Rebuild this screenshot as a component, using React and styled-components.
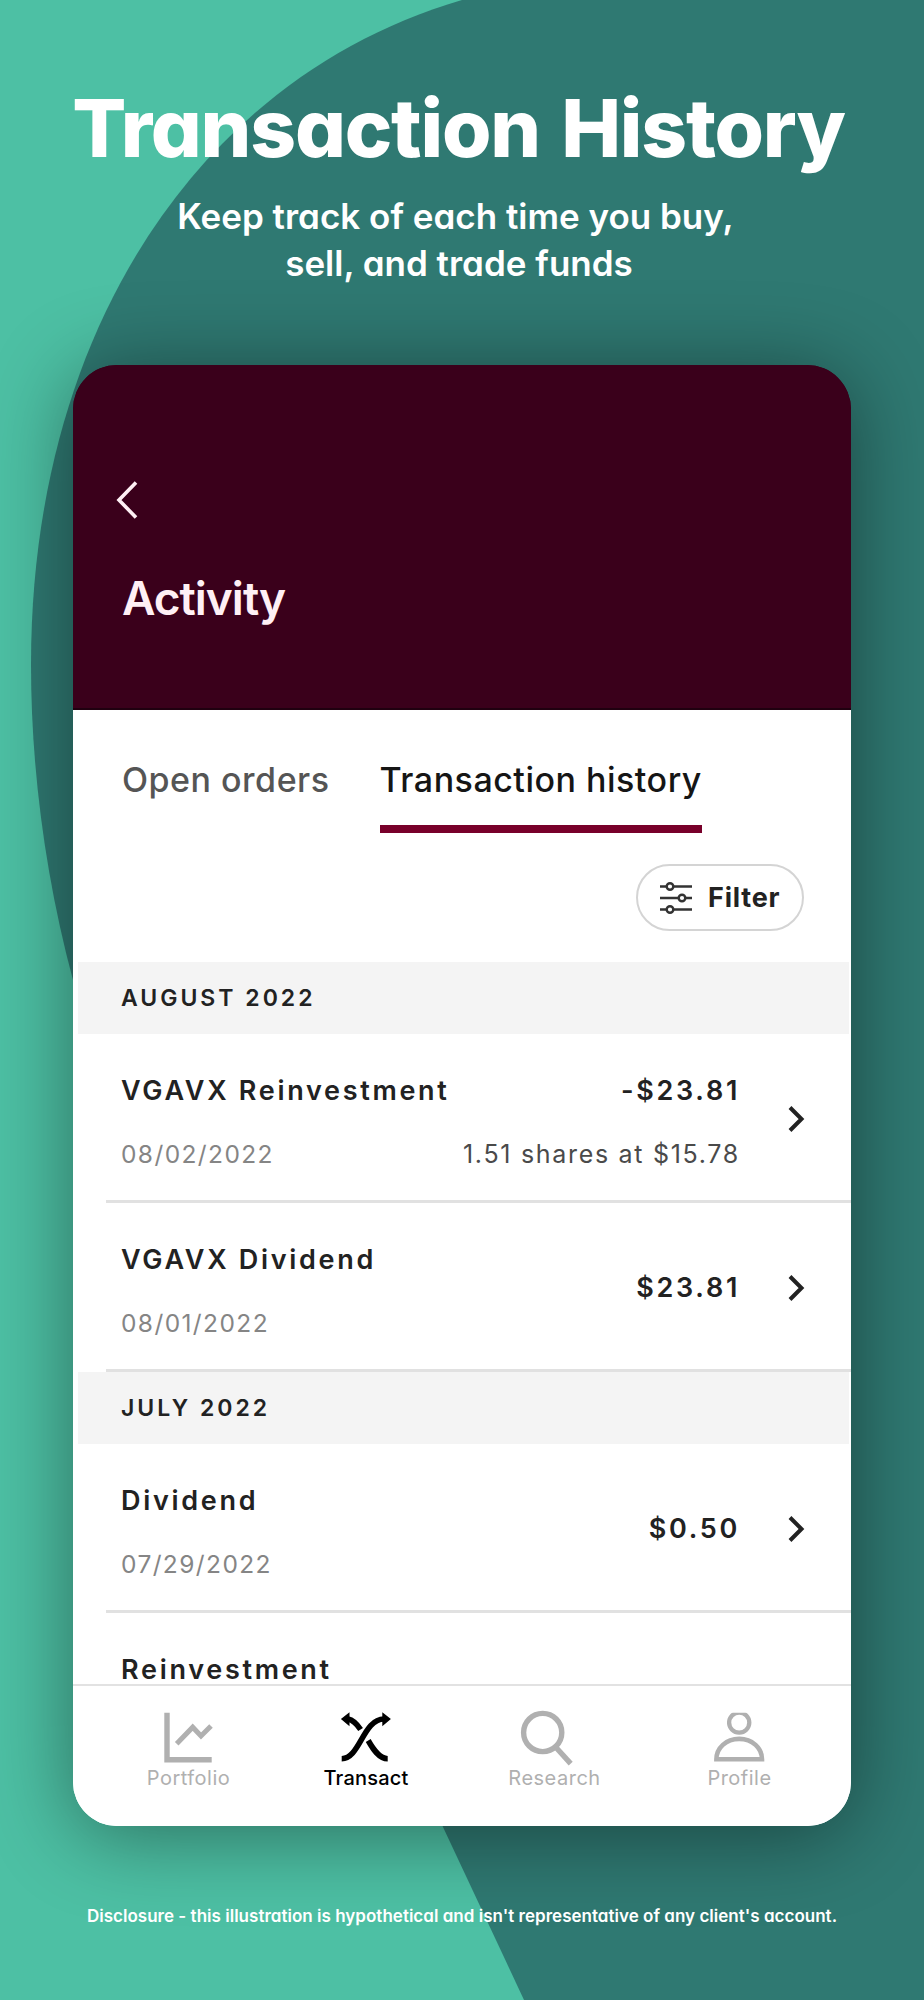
import styled, { createGlobalStyle } from "styled-components";

const activity = [
  {
    month: "AUGUST 2022",
    items: [
      {
        name: "VGAVX Reinvestment",
        date: "08/02/2022",
        amount: "-$23.81",
        detail: "1.51 shares at $15.78",
      },
      { name: "VGAVX Dividend", date: "08/01/2022", amount: "$23.81" },
    ],
  },
  {
    month: "JULY 2022",
    items: [
      { name: "Dividend", date: "07/29/2022", amount: "$0.50" },
      { name: "Reinvestment", date: "", amount: "" },
    ],
  },
];

const PortfolioIcon = () => (
  <NavIcon viewBox="0 0 60 59">
    <path d="M9 6.7V53.7H53.7" strokeWidth="5.4" />
    <path d="M18.7 37.7L34.7 21.2L43 30L53 20" strokeWidth="5" />
  </NavIcon>
);

const TransactIcon = () => (
  <NavIcon viewBox="0 0 60 59">
    <path d="M5.7 52.7C24 52.7 27 13 48 13" strokeWidth="5.6" />
    <path d="M12 13C17 14 21 18 24.6 23.6" strokeWidth="5.6" />
    <path d="M32.2 34.5C37 43 43 52.7 51.7 52.7" strokeWidth="5.6" />
    <path d="M46.3 6.2L54.9 13L46.3 20.3ZM13.5 6.2L4.9 13L13.5 20.3Z" fill="currentColor" stroke="none" />
  </NavIcon>
);

const ResearchIcon = () => (
  <NavIcon viewBox="0 0 60 59">
    <circle cx="18.7" cy="26.5" r="19.1" strokeWidth="5.4" />
    <path d="M31.6 41L46.7 57.6" strokeWidth="5.4" />
  </NavIcon>
);

const ProfileIcon = () => (
  <NavIcon viewBox="0 0 60 59">
    <clipPath id="head">
      <rect x="0" y="6.8" width="60" height="40" />
    </clipPath>
    <circle cx="30.2" cy="16.6" r="10.1" strokeWidth="4.3" clipPath="url(#head)" />
    <path d="M7.4 53.3C7.4 42 17 32.9 30.2 32.9S53 42 53 53.3Z" strokeWidth="4.6" />
  </NavIcon>
);

const nav = [
  { label: "Portfolio", icon: PortfolioIcon },
  { label: "Transact", icon: TransactIcon, active: true },
  { label: "Research", icon: ResearchIcon },
  { label: "Profile", icon: ProfileIcon },
];

const Row = ({ item }) => (
  <RowWrap>
    <Info>
      <Name>{item.name}</Name>
      <TradeDate>{item.date}</TradeDate>
    </Info>
    {item.amount && (
      <>
        <Amounts $stacked={!!item.detail}>
          <Name>{item.amount}</Name>
          {item.detail && <Detail>{item.detail}</Detail>}
        </Amounts>
        <Chevron viewBox="0 0 18 28">
          <path d="M3 2.5L14.5 14L3 25.5" />
        </Chevron>
      </>
    )}
  </RowWrap>
);

const App = () => {
  return (
    <Page>
      <GlobalStyle />
      <Backdrop viewBox="0 0 924 2000">
        <path d="M924 0H462C205 75 31 325 31 665C31 770 46 880 73 980L443 1827L524 2000H924Z" />
      </Backdrop>

      <Title>Transaction History</Title>
      <Subtitle>
        <Line $shift={13}>Keep track of each time you buy,</Line>
        <Line $shift={6}>sell, and trade funds</Line>
      </Subtitle>

      <Phone>
        <Header>
          <Back viewBox="0 0 22 38">
            <path d="M20 1.5L3 19L20 36.5" />
          </Back>
          <Heading>Activity</Heading>
        </Header>

        <Tabs>
          <Tab>Open orders</Tab>
          <Tab $active>Transaction history</Tab>
        </Tabs>

        <Toolbar>
          <FilterButton>
            <svg width="32" height="34" viewBox="0 0 32 34">
              <path d="M0 5.5H32M0 17H32M0 28.5H32" />
              <circle cx="10" cy="5.5" r="3.3" />
              <circle cx="22" cy="17" r="3.3" />
              <circle cx="10" cy="28.5" r="3.3" />
            </svg>
            Filter
          </FilterButton>
        </Toolbar>

        <List>
          {activity.map((group) => (
            <section key={group.month}>
              <Month>{group.month}</Month>
              {group.items.map((item) => (
                <Row key={item.name} item={item} />
              ))}
            </section>
          ))}
        </List>

        <Nav>
          {nav.map(({ label, icon: Icon, active }) => (
            <NavItem key={label} $active={active}>
              <Icon />
              <NavLabel>{label}</NavLabel>
            </NavItem>
          ))}
        </Nav>
      </Phone>

      <Disclosure>
        Disclosure - this illustration is hypothetical and isn't representative
        of any client's account.
      </Disclosure>
    </Page>
  );
};

const GlobalStyle = createGlobalStyle`
  body {
    margin: 0;
    font-family: Inter, "Liberation Sans", sans-serif;
  }

  * {
    box-sizing: border-box;
  }
`;

const Page = styled.main`
  position: relative;
  display: flex;
  flex-direction: column;
  align-items: center;
  width: 924px;
  height: 2000px;
  padding-top: 80px;
  overflow: hidden;
  background: #4dc0a4;
  color: #fff;
`;

const Backdrop = styled.svg`
  position: absolute;
  inset: 0;
  width: 100%;
  height: 100%;
  fill: #2f7972;
`;

const Title = styled.h1`
  position: relative;
  margin: 0;
  padding-right: 7px;
  font-size: 80px;
  line-height: 96px;
  font-weight: 820;
  letter-spacing: -1.2px;
  word-spacing: 5px;
  white-space: nowrap;
  /* single-storey a */
  font-feature-settings: "cv11";
`;

const Subtitle = styled.p`
  position: relative;
  display: flex;
  flex-direction: column;
  align-items: center;
  margin: 17px 0 0;
  font-size: 35px;
  line-height: 47px;
  font-weight: 600;
  font-feature-settings: "cv11";
`;

const Line = styled.span`
  padding-right: ${(props) => props.$shift}px;
`;

const Phone = styled.div`
  position: relative;
  display: flex;
  flex-direction: column;
  width: 778px;
  height: 1461px;
  margin-top: 78px;
  border-radius: 44px;
  overflow: hidden;
  background: linear-gradient(#3a001b 200px, #fff 200px);
  color: #222;
  box-shadow: 0 8px 84px rgba(0, 0, 0, 0.44);
`;

const Header = styled.header`
  display: flex;
  flex-direction: column;
  flex-shrink: 0;
  height: 345px;
  padding: 116px 0 0 43px;
  background: #3a001b;
  border-bottom: 2px solid #200010;
`;

const Back = styled.svg`
  width: 22px;
  height: 38px;
  fill: none;
  stroke: #fff0f5;
  stroke-width: 3.6;
`;

const Heading = styled.h2`
  margin: 51px 0 0 6px;
  font-size: 46px;
  line-height: 56px;
  font-weight: 600;
  letter-spacing: -1px;
  color: #fff0f5;
`;

const Tabs = styled.div`
  display: flex;
  flex-shrink: 0;
  gap: 50px;
  padding: 48px 0 0 49px;
`;

const Tab = styled.div`
  padding-bottom: 23px;
  font-size: 34px;
  line-height: 44px;
  font-weight: ${(props) => (props.$active ? 550 : 450)};
  letter-spacing: 0.5px;
  color: ${(props) => (props.$active ? "#151515" : "#555")};
  border-bottom: 8px solid ${(props) => (props.$active ? "#78002a" : "transparent")};
`;

const Toolbar = styled.div`
  display: flex;
  flex-shrink: 0;
  justify-content: flex-end;
  padding: 31px 47px 31px 0;
`;

const FilterButton = styled.button`
  display: flex;
  align-items: center;
  gap: 16px;
  width: 168px;
  height: 67px;
  padding: 0 0 0 22px;
  border: 2.5px solid #d4d4d4;
  border-radius: 34px;
  background: #fff;
  font-family: inherit;
  font-size: 27px;
  font-weight: 650;
  letter-spacing: 0.8px;
  color: #222;

  svg {
    fill: #fff;
    stroke: #333;
    stroke-width: 2.4;
  }
`;

const List = styled.div`
  flex: 1;
  min-height: 0;
  overflow: hidden;
`;

const Month = styled.h3`
  height: 72px;
  margin: 0 2px 0 5px;
  padding-left: 43px;
  background: #f4f4f4;
  font-size: 23px;
  line-height: 73px;
  font-weight: 600;
  letter-spacing: 3px;
`;

const RowWrap = styled.div`
  display: flex;
  align-items: center;
  height: 169px;
  margin-left: 33px;
  padding: 0 46px 0 15px;
  border-bottom: 3px solid #e1e1e1;
`;

const Info = styled.div`
  flex: 1;
  padding-top: 9px;
`;

const Name = styled.div`
  height: 34px;
  font-size: 27px;
  line-height: 34px;
  font-weight: 620;
  letter-spacing: 2.7px;
`;

const TradeDate = styled.div`
  height: 30px;
  margin-top: 31px;
  font-size: 24.5px;
  line-height: 30px;
  letter-spacing: 1.4px;
  color: #858585;
`;

const Amounts = styled.div`
  display: flex;
  flex-direction: column;
  align-items: flex-end;
  padding-top: ${(props) => (props.$stacked ? 9 : 3)}px;
`;

const Detail = styled(TradeDate)`
  font-size: 25px;
  letter-spacing: 1.7px;
  color: #4a4a4a;
`;

const Chevron = styled.svg`
  width: 18px;
  height: 28px;
  margin: 3px 0 0 47px;
  fill: none;
  stroke: #222;
  stroke-width: 4;
`;

const Nav = styled.nav`
  display: grid;
  grid-template-columns: 176px 179px 198px 172px;
  flex-shrink: 0;
  height: 142px;
  padding: 20px 0 0 27px;
  border-top: 2px solid #e2e2e2;
  background: #fff;
`;

const NavItem = styled.div`
  display: flex;
  flex-direction: column;
  align-items: center;
  font-size: 20px;
  line-height: 24px;
  font-weight: ${(props) => (props.$active ? 500 : 400)};
  letter-spacing: ${(props) => (props.$active ? 0.2 : 0.5)}px;
  color: ${(props) => (props.$active ? "#000" : "#b0b0b0")};
`;

const NavIcon = styled.svg`
  width: 60px;
  height: 59px;
  overflow: visible;
  fill: none;
  stroke: currentColor;
`;

const NavLabel = styled.span`
  padding: 1px 0 0 1px;
`;

const Disclosure = styled.p`
  position: relative;
  margin: 78px 0 0;
  font-size: 17px;
  line-height: 24px;
  font-weight: 600;
  letter-spacing: 0.02px;
  white-space: nowrap;
  font-feature-settings: "cv11";
`;

export default App;
